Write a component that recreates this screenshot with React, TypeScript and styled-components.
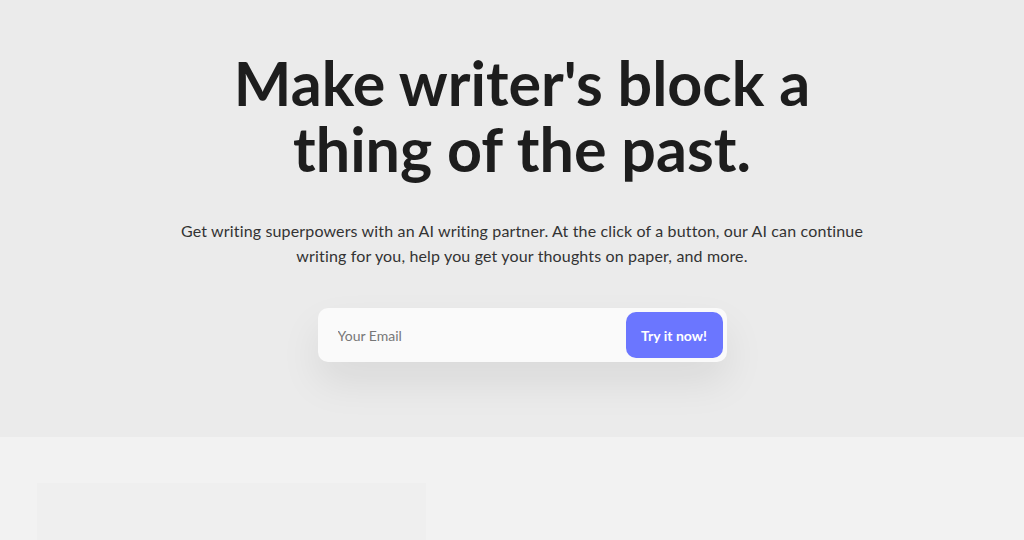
import React from "react";
import styled, { createGlobalStyle } from "styled-components";

const Global = createGlobalStyle`
  html, body { margin: 0; padding: 0; background: #f2f2f2; }
  body { font-family: Lato, "Open Sans", sans-serif; color: #1d1d1d; }
  * { box-sizing: border-box; }
`;

const Hero = styled.section`
  background: #ebebeb;
  height: 437px;
  display: flex;
  flex-direction: column;
  align-items: center;
  padding: 50px 0 0 20px;
`;

const Title = styled.h1`
  margin: 0;
  font-family: Lato, sans-serif;
  font-weight: 700;
  font-size: 61px;
  line-height: 66px;
  text-align: center;
  color: #1d1d1d;
  width: 640px;
`;

const Lead = styled.p`
  margin: 36px 0 0;
  font-family: Lato, sans-serif;
  font-size: 16px;
  letter-spacing: 0.15px;
  line-height: 25px;
  color: #333;
  text-align: center;
  width: 720px;
`;

const Form = styled.form`
  margin-top: 40px;
  width: 409px;
  height: 54px;
  background: #fafafa;
  border-radius: 10px;
  box-shadow: 0 20px 40px rgba(0, 0, 0, 0.08);
  display: flex;
  align-items: center;
  padding: 4px 4px 4px 18px;
`;

const Input = styled.input`
  flex: 1;
  border: none;
  background: transparent;
  outline: none;
  font-family: Lato, sans-serif;
  font-size: 14px;
  color: #333;
  &::placeholder { color: #777; }
`;

const Button = styled.button`
  width: 97px;
  height: 46px;
  border: none;
  border-radius: 10px;
  background: #6b76ff;
  color: #fff;
  font-family: Lato, sans-serif;
  font-weight: 700;
  font-size: 14px;
  cursor: pointer;
`;

const Features = styled.section`
  background: #f2f2f2;
  padding: 46px 0 0 37px;
  height: 200px;
`;

const Card = styled.div`
  width: 389px;
  height: 200px;
  background: #efefef;
`;

export default function App() {
  return (
    <>
      <Global />
      <Hero>
        <Title>Make writer's block a thing of the past.</Title>
        <Lead>
          Get writing superpowers with an AI writing partner. At the click of a button, our AI can continue
          writing for you, help you get your thoughts on paper, and more.
        </Lead>
        <Form onSubmit={(e) => e.preventDefault()}>
          <Input placeholder="Your Email" />
          <Button type="submit">Try it now!</Button>
        </Form>
      </Hero>
      <Features>
        <Card />
      </Features>
    </>
  );
}
